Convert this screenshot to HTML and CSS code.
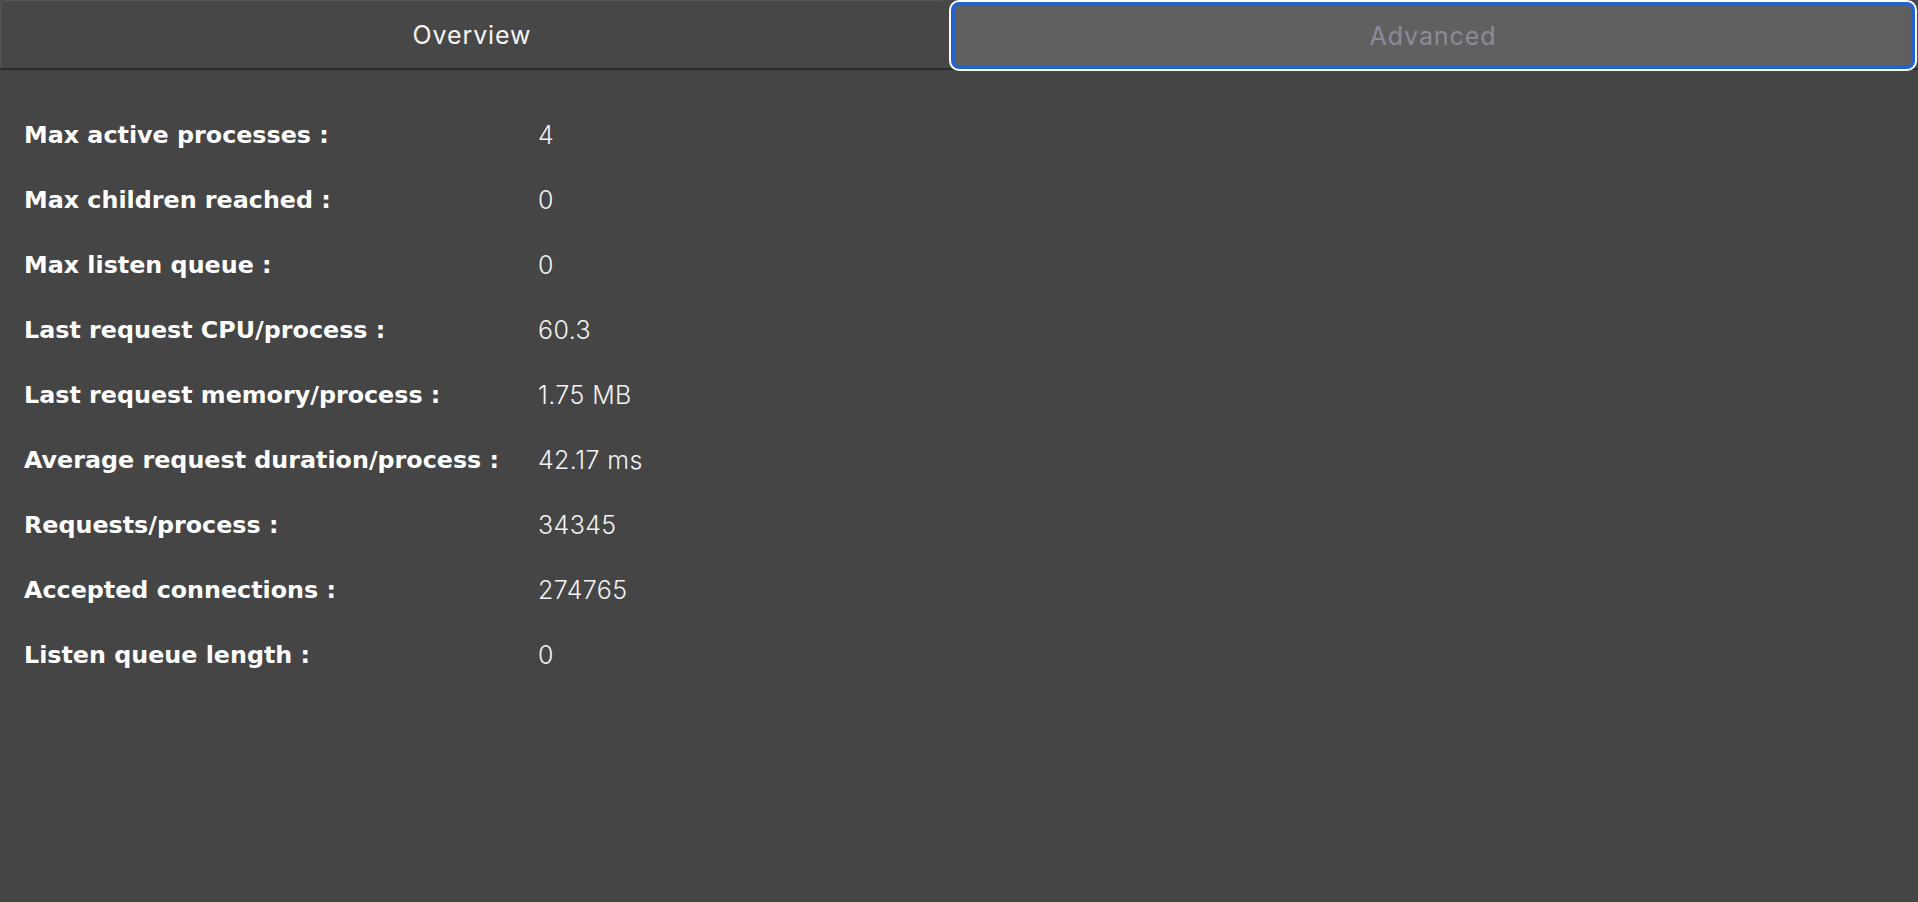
FILE: index.html
```html
<!DOCTYPE html>
<html lang="en">
<head>
<meta charset="utf-8">
<title>Process status</title>
<link rel="stylesheet" href="styles.css">
</head>
<body>
<div class="panel">
  <div class="tabs">
    <div class="tab tab-overview">Overview</div>
    <div class="tab tab-advanced">Advanced</div>
  </div>
  <div class="stats">
    <div class="label">Max active processes :</div><div class="value">4</div>
    <div class="label">Max children reached :</div><div class="value">0</div>
    <div class="label">Max listen queue :</div><div class="value">0</div>
    <div class="label">Last request CPU/process :</div><div class="value">60.3</div>
    <div class="label">Last request memory/process :</div><div class="value">1.75 MB</div>
    <div class="label">Average request duration/process :</div><div class="value">42.17 ms</div>
    <div class="label">Requests/process :</div><div class="value">34345</div>
    <div class="label">Accepted connections :</div><div class="value">274765</div>
    <div class="label">Listen queue length :</div><div class="value">0</div>
  </div>
</div>
</body>
</html>
```
FILE: styles.css
```css
html, body {
  margin: 0;
  padding: 0;
  background: #454545;
}
body {
  width: 1918px;
  height: 902px;
  overflow: hidden;
  font-family: Inter, "Noto Sans", sans-serif;
  color: #ffffff;
}
.panel {
  height: 902px;
  background: #454545;
}
.tabs {
  display: flex;
  height: 68px;
  border-bottom: 2px solid #2b2b2b;
  background: #474747;
}
.tab {
  display: flex;
  align-items: center;
  justify-content: center;
  font-size: 25px;
  font-weight: 400;
  letter-spacing: 0.9px;
}
.tab-overview {
  flex: 1;
  color: #f4f4f4;
  border-top: 1px solid #565656;
  border-left: 1px solid #565656;
  border-top-left-radius: 5px;
}
.tab-advanced {
  width: 956px;
  margin: 2px 3px 0 8px;
  height: 59px;
  background: #606060;
  color: #8d8b98;
  border: 4px solid #2463c9;
  border-radius: 8px;
  box-shadow: 0 0 0 2px #ffffff;
}
.stats {
  display: grid;
  grid-template-columns: 514px 1fr;
  grid-auto-rows: 65px;
  align-items: center;
  padding: 32px 24px 0 24px;
}
.label {
  font-family: "DejaVu Sans", Inter, sans-serif;
  font-size: 23.8px;
  font-weight: 700;
  color: #ffffff;
}
.value {
  font-size: 25px;
  font-weight: 300;
  letter-spacing: 0.4px;
  color: #f2f2f2;
}
```
